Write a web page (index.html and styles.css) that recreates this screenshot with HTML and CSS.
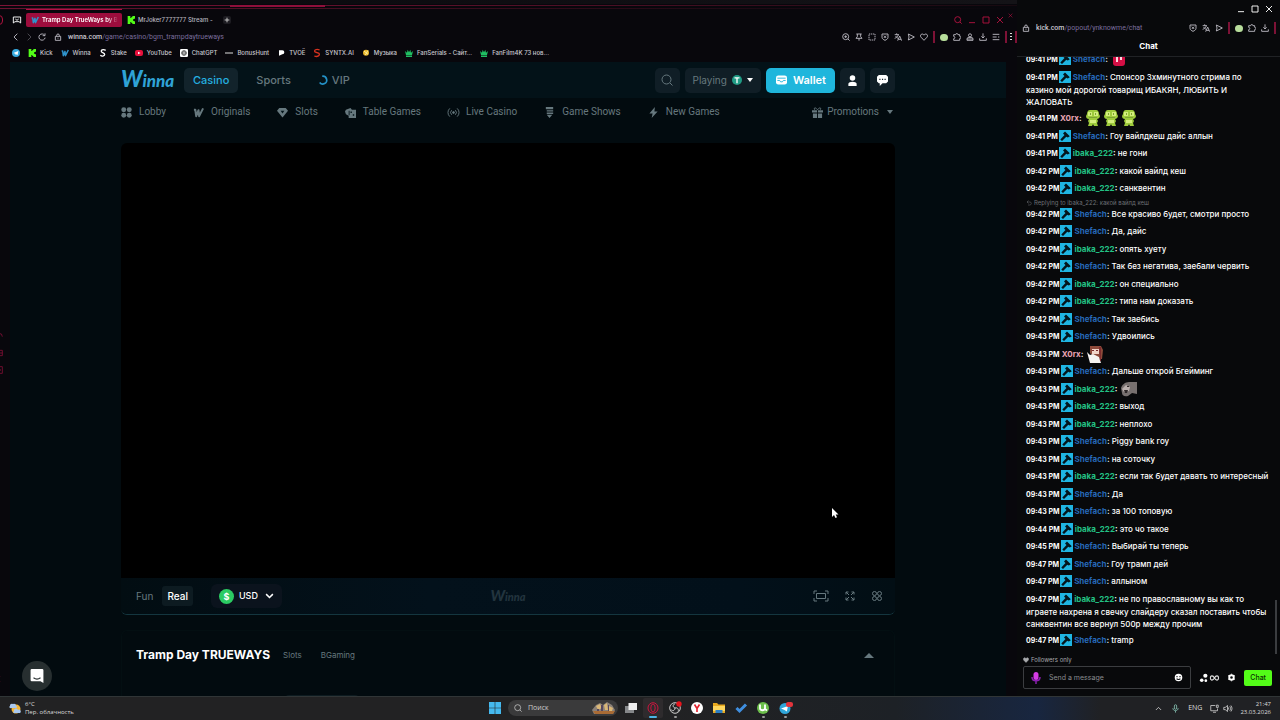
FILE: index.html
```html
<!DOCTYPE html>
<html lang="ru">
<head>
    <meta charset="UTF-8">
    <meta name="viewport" content="width=device-width, initial-scale=1.0">
    <title>Tramp Day TrueWays by BGaming</title>
    <link rel="stylesheet" href="styles.css">
</head>
<body>
    <!-- shared icons -->
    <svg class="sprite" aria-hidden="true">
        <symbol id="i-lock" viewBox="0 0 12 12"><path d="M2 5h8v6H2zM4 5V3.500a2 2 0 0 1 4 0V5M6 7v1.500"/></symbol>
        <symbol id="i-search" viewBox="0 0 12 12"><circle cx="5.500" cy="5.500" r="4.500"/><path d="M9 9l2.500 2.500"/></symbol>
        <symbol id="i-zoom" viewBox="0 0 12 12"><circle cx="5.500" cy="5.500" r="4.500"/><path d="M9 9l2.500 2.500M3.500 5.500h4M5.500 3.500v4"/></symbol>
        <symbol id="i-pin" viewBox="0 0 12 12"><path d="M2 1.500h8M3.500 1.500v4L1.500 8h9l-2-2.500v-4M6 8v3.500"/></symbol>
        <symbol id="i-snap" viewBox="0 0 12 12"><path d="M1.500 1.500h9v9h-9z" stroke-dasharray="2 1"/></symbol>
        <symbol id="i-shield" viewBox="0 0 12 12"><path d="M1.500 1.500h9v5c0 2-2 3.500-4.500 4.500C3.500 10 1.500 8.500 1.500 6.500zM4.300 4l3.400 3.400M7.700 4L4.300 7.400"/></symbol>
        <symbol id="i-translate" viewBox="0 0 12 12"><path d="M1 2.500h6.500M4 .5v2M6.500 3C5.500 5.500 3.500 7 1 8M2.500 4.500C3.500 6.500 5 7.500 6 8M5.500 11.500l3-7 3 7M6.500 9.500h4"/></symbol>
        <symbol id="i-send" viewBox="0 0 12 12"><path d="M2 1.500L11 6l-9 4.500L3 6z"/></symbol>
        <symbol id="i-heart" viewBox="0 0 12 12"><path d="M6 11L1.500 6.300C-.2 4.500 1 1.500 3.400 1.500 4.700 1.500 5.500 2.400 6 3.300c.5-.9 1.300-1.800 2.600-1.800 2.400 0 3.600 3 1.900 4.800z"/></symbol>
        <symbol id="i-puzzle" viewBox="0 0 12 12"><path d="M1 2.500h3a1.700 1.700 0 0 1 3.400 0H10V5a1.700 1.700 0 0 1 0 3.400V11H1V8.500a1.700 1.700 0 0 0 0-3.400z"/></symbol>
        <symbol id="i-user" viewBox="0 0 12 12"><circle cx="6" cy="3.500" r="2.300"/><path d="M1.500 8c1-2 8-2 9 0v3h-9zM1.500 9h9"/></symbol>
        <symbol id="i-down" viewBox="0 0 12 12"><path d="M6 .5v7M3.500 5L6 7.500 8.500 5M1 8v3h10V8"/></symbol>
        <symbol id="i-menu" viewBox="0 0 12 12"><path d="M1 2h10M1 6h6M9 6h2M1 10h10"/></symbol>
        <symbol id="i-min" viewBox="0 0 12 12"><path d="M1.500 10h9"/></symbol>
        <symbol id="i-max" viewBox="0 0 12 12"><path d="M1.500 1.500h9v9h-9z"/></symbol>
        <symbol id="i-close" viewBox="0 0 12 12"><path d="M1.500 1.500l9 9M10.500 1.500l-9 9"/></symbol>
        <symbol id="i-kick" viewBox="0 0 12 12"><path fill="#53fc18" stroke="none" d="M1 0h4v3h1.500V1.500H8V0h4v4h-1.500v1H9v2h1.500v1H12v4H8v-1.500H6.500V9H5v3H1z"/></symbol>
        <symbol id="i-winna" viewBox="0 0 12 12"><path fill="none" stroke="currentColor" stroke-width="2.200" stroke-linejoin="round" d="M1 3l1.500 0 1 7L6 3.500l.7 6.500L11 1.500"/></symbol>
        <symbol id="i-crown" viewBox="0 0 12 12"><path fill="#1fbf62" stroke="none" d="M0 3l3 2.500L4 1l2 4 2-4 1 4.500L12 3l-1.500 6h-9zM1.500 9.800h9V12h-9z"/></symbol>
        <symbol id="i-mod" viewBox="0 0 12 12"><path fill="#1fb5e2" stroke="none" d="M0 0h12v12H0z"/><path fill="#04151c" stroke="none" d="M6 1.500l4.800 4.800-2 1.200-1.500-.8L3 11 1.300 9.500 5.500 5 4 3.500z"/></symbol>
        <symbol id="i-frog" viewBox="0 0 16 18"><g stroke="none"><path fill="#9ecb3c" d="M2 5c0-2 1-4 3-4h6c2 0 3 2 3 4l1 2c0 2-2 3-3 3l1 2-1 2 1 3H9l-1-2-1 2H3l1-3-1-2 1-2C2 10 1 9 1 7z"/><path fill="#d3ee7c" d="M3 3h4v4H3zM9 3h4v4H9zM5 11h6v3H5z"/><path fill="#7da332" d="M4 8h8v1H4zM5 4h1v2H5zM10 4h1v2h-1zM7 15h2v1H7z"/></g></symbol>
    </svg>

    <main class="desktop">
        <section class="browser">
            <div class="frame-lines"></div>
            <div class="tabbar">
                <i class="gx-mark"></i>
                <svg class="icon" viewBox="0 0 12 12"><path d="M.5 1.500h11v9l-2.500-2H3l-2.500 2zM3.500 4.500L6 6.500l2.500-2"/></svg>
                <button class="tab active"><svg class="icon blue" viewBox="0 0 12 12"><use href="#i-winna"/></svg><span>Tramp Day TrueWays by B</span></button>
                <button class="tab"><svg class="icon" viewBox="0 0 12 12"><use href="#i-kick"/></svg><span>MrJoker7777777 Stream -</span></button>
                <button class="new-tab" aria-label="Новая вкладка"><svg class="icon" viewBox="0 0 12 12"><path d="M6 2.500v7M2.500 6h7"/></svg></button>
                <div class="window-buttons red">
                    <button aria-label="Поиск вкладок"><svg class="icon" viewBox="0 0 12 12"><use href="#i-search"/></svg></button>
                    <button aria-label="Свернуть"><svg class="icon" viewBox="0 0 12 12"><use href="#i-min"/></svg></button>
                    <button aria-label="Развернуть"><svg class="icon" viewBox="0 0 12 12"><use href="#i-max"/></svg></button>
                    <button aria-label="Закрыть"><svg class="icon" viewBox="0 0 12 12"><use href="#i-close"/></svg></button>
                </div>
                <svg class="icon behind-close" viewBox="0 0 12 12"><use href="#i-close"/></svg>
            </div>
            <div class="address">
                <div class="history">
                    <svg class="icon" viewBox="0 0 12 12"><path d="M8 1L3 6l5 5"/></svg>
                    <svg class="icon dim" viewBox="0 0 12 12"><path d="M4 1l5 5-5 5"/></svg>
                    <svg class="icon" viewBox="0 0 12 12"><path d="M10 3.500A4.700 4.700 0 1 0 10.700 7M10.500 .5v3.500H7"/></svg>
                </div>
                <svg class="icon" viewBox="0 0 12 12"><use href="#i-lock"/></svg>
                <span class="url"><b>winna.com</b>/game/casino/bgm_trampdaytrueways</span>
                <div class="tools">
                    <svg class="icon" viewBox="0 0 12 12"><use href="#i-zoom"/></svg>
                    <svg class="icon" viewBox="0 0 12 12"><use href="#i-pin"/></svg>
                    <svg class="icon" viewBox="0 0 12 12"><use href="#i-snap"/></svg>
                    <svg class="icon" viewBox="0 0 12 12"><use href="#i-shield"/></svg>
                    <svg class="icon" viewBox="0 0 12 12"><use href="#i-translate"/></svg>
                    <svg class="icon" viewBox="0 0 12 12"><use href="#i-send"/></svg>
                    <svg class="icon" viewBox="0 0 12 12"><use href="#i-heart"/></svg>
                    <i class="sep"></i>
                    <i class="green-dot"></i>
                    <svg class="icon" viewBox="0 0 12 12"><use href="#i-puzzle"/></svg>
                    <svg class="icon" viewBox="0 0 12 12"><use href="#i-user"/></svg>
                    <svg class="icon" viewBox="0 0 12 12"><use href="#i-down"/></svg>
                    <svg class="icon" viewBox="0 0 12 12"><use href="#i-menu"/></svg>
                    <i class="sep"></i>
                    <svg class="dots" viewBox="0 0 2 8"><path d="M0 0h2v1H0zM0 3h2v1H0zM0 6h2v1H0z"/></svg>
                    <i class="sep"></i>
                </div>
            </div>
            <nav class="bookmarks">
                <a href="#" aria-label="Telegram"><svg class="icon" viewBox="0 0 12 12"><circle cx="6" cy="6" r="6" fill="#36a9df" stroke="none"/><path fill="#fff" stroke="none" d="M2 6l7.500-3-1.200 6.500L6 8 5 9V7z"/></svg></a>
                <a href="#"><svg class="icon" viewBox="0 0 12 12"><use href="#i-kick"/></svg>Kick</a>
                <a href="#"><svg class="icon blue" viewBox="0 0 12 12"><use href="#i-winna"/></svg>Winna</a>
                <a href="#"><svg class="icon" viewBox="0 0 12 12"><path stroke="#fff" stroke-width="2" d="M10 2C6-.5 2 2 4 4.500c1 1 5 1.500 4.500 4C8 11 4 11.500 2 9.500"/></svg>Stake</a>
                <a href="#"><svg class="icon" viewBox="0 0 12 12"><rect y="1.500" width="12" height="9" rx="3" fill="#e8103c" stroke="none"/><path fill="#fff" stroke="none" d="M4.500 4l4 2-4 2z"/></svg>YouTube</a>
                <a href="#"><svg class="icon" viewBox="0 0 12 12"><rect width="12" height="12" rx="2" fill="#fff" stroke="none"/><circle cx="6" cy="6" r="3.500" stroke="#444"/><path stroke="#444" d="M6 4l2 1v2L6 8 4 7V5z"/></svg>ChatGPT</a>
                <a href="#"><svg class="icon" viewBox="0 0 12 12"><path stroke="#aaa" stroke-width="2" d="M0 6h12"/></svg>BonusHunt</a>
                <a href="#"><svg class="icon" viewBox="0 0 12 12"><path fill="#fff" stroke="none" d="M3 2h5a3 3 0 0 1 0 6L3 10z"/></svg>TVOЁ</a>
                <a href="#"><svg class="icon" viewBox="0 0 12 12"><path stroke="#d8321f" stroke-width="2" d="M10 1.500C5-.5 1 1.500 3 4.500L9 6.500c2 3-2 6-7 4"/></svg>SYNTX.AI</a>
                <a href="#"><svg class="icon" viewBox="0 0 12 12"><circle cx="6" cy="5.500" r="4.500" fill="#e9b62a" stroke="none"/><path stroke="#fff2a0" d="M3 3l6 5M9 2L5 9"/></svg>Музыка</a>
                <a href="#"><svg class="icon" viewBox="0 0 12 12"><use href="#i-crown"/></svg>FanSerials - Сайт...</a>
                <a href="#"><svg class="icon" viewBox="0 0 12 12"><use href="#i-crown"/></svg>FanFilm4K 73 нов...</a>
            </nav>

            <div class="viewport">
                <aside class="side-strip">
                    <svg class="icon" viewBox="0 0 12 12"><path d="M1 7a5 5 0 0 1 10 0"/></svg>
                    <svg class="icon" viewBox="0 0 12 12"><path d="M2 2h9v8H2zM2 6h9"/></svg>
                    <svg class="icon" viewBox="0 0 12 12"><circle cx="6" cy="6" r="2"/><path d="M1 1h10v10H1z"/></svg>
                    <svg class="icon last" viewBox="0 0 12 12"><use href="#i-close"/></svg>
                </aside>
                <div class="page">
                    <header class="site-header">
                        <div class="wrap header-row">
                            <a class="logo" href="#">Winna</a>
                            <a class="section active" href="#">Casino</a>
                            <a class="section" href="#">Sports</a>
                            <a class="section" href="#"><svg class="icon ring" viewBox="0 0 12 12"><path d="M5 1.500A4.700 4.700 0 1 1 2 9" /></svg>VIP</a>
                            <div class="actions">
                                <button class="square muted" aria-label="Search"><svg class="icon" viewBox="0 0 12 12"><use href="#i-search"/></svg></button>
                                <button class="playing">Playing
                                    <svg class="icon coin" viewBox="0 0 12 12"><circle cx="6" cy="6" r="6" fill="#209b85" stroke="none"/><path stroke="#fff" stroke-width="1.600" d="M3 3.500h6M6 3.500V10"/></svg>
                                    <i class="caret white"></i>
                                </button>
                                <button class="wallet"><svg class="icon" viewBox="0 0 12 12"><rect y="1" width="12" height="10" rx="2.500" fill="#fff" stroke="none"/><path stroke="#1fb6dc" d="M1.500 4h9M1.500 6.500H4l1 1.500h2l1-1.500h2.500"/></svg>Wallet</button>
                                <button class="square" aria-label="Account"><svg class="icon" viewBox="0 0 12 12"><circle cx="6" cy="3.200" r="3" fill="#fff" stroke="none"/><path fill="#fff" stroke="none" d="M1.500 12V9.500c0-3 9-3 9 0V12z"/></svg></button>
                                <button class="square" aria-label="Chat"><svg class="icon" viewBox="0 0 12 12"><path fill="#fff" stroke="none" d="M2 0h8l2 2v5l-2 2H6l-3 3V9H2L0 7V2z"/><path stroke="#17242b" stroke-width="1.400" d="M2.500 4.700h1.300M5.400 4.700h1.300M8.200 4.700h1.300"/></svg></button>
                            </div>
                        </div>
                    </header>
                    <nav class="site-nav">
                        <div class="wrap nav-row">
                            <a href="#"><svg class="icon solid" viewBox="0 0 12 12"><circle cx="3" cy="3" r="2.700"/><circle cx="9" cy="3" r="2.700"/><circle cx="3" cy="9" r="2.700"/><circle cx="9" cy="9" r="2.700"/></svg>Lobby</a>
                            <a href="#"><svg class="icon" viewBox="0 0 12 12"><use href="#i-winna"/></svg>Originals</a>
                            <a href="#"><svg class="icon solid" viewBox="0 0 12 12"><path d="M2.500 1h7L12 4 6 11.500 0 4z"/><path fill="#03141a" d="M4 4h4L6 7z"/></svg>Slots</a>
                            <a href="#"><svg class="icon solid" viewBox="0 0 12 12"><path d="M1 3l5-2 1.500 2H12v9H4V9.500L1 8 0 5z"/><path fill="#03141a" d="M4 4h1v5H4zM6 5h1.500v1.500H6zM8.500 8H10v1.500H8.500z"/></svg>Table Games</a>
                            <a href="#"><svg class="icon" viewBox="0 0 12 12"><circle cx="6" cy="6" r="1" fill="currentColor"/><path d="M4 3.500a3.500 3.500 0 0 0 0 5M8 3.500a3.500 3.500 0 0 1 0 5M2 1.500a6 6 0 0 0 0 9M10 1.500a6 6 0 0 1 0 9"/></svg>Live Casino</a>
                            <a href="#"><svg class="icon solid" viewBox="0 0 12 12"><path d="M2 0h8v2.500H2zM3 3.500h7v1.500H3zM3 6h7v1.500H3zM3 8.500h6L6 12z"/></svg>Game Shows</a>
                            <a href="#"><svg class="icon solid" viewBox="0 0 12 12"><path d="M7.500 0L1.500 7H5l-1 5 6.500-7H7z"/></svg>New Games</a>
                            <a class="promo" href="#"><svg class="icon solid" viewBox="0 0 12 12"><path d="M0 3.500h5.500V6H0zM6.500 3.500H12V6H6.500zM1 7h4.500v5H1zM6.500 7H11v5H6.500z"/><path fill="none" stroke="currentColor" d="M6 3C3-1 1.500 2 3 3M6 3c3-4 4.500-1 3 0"/></svg>Promotions<i class="caret"></i></a>
                        </div>
                    </nav>

                    <div class="wrap">
                        <div class="game">
                            <div class="game-screen">
                                <svg class="cursor" viewBox="0 0 8 12"><path d="M1 1v9l2-2 1.500 3 1.500-.7L4.700 7.500H7.500z"/></svg>
                            </div>
                            <div class="game-bar">
                                <button class="mode">Fun</button>
                                <button class="mode on">Real</button>
                                <button class="currency"><i class="usd">$</i>USD
                                    <svg class="icon" viewBox="0 0 12 12"><path d="M1.500 3.500L6 8l4.500-4.500"/></svg>
                                </button>
                                <span class="logo small">Winna</span>
                                <div class="game-tools">
                                    <svg class="icon wide" viewBox="0 0 16 12"><path d="M1 4V1h3M12 1h3v3M15 8v3h-3M4 11H1V8M3.500 3.500h9v5h-9z"/></svg>
                                    <svg class="icon" viewBox="0 0 12 12"><path d="M2 4.500V2h2.500M7.500 2H10v2.500M10 7.500V10H7.500M4.500 10H2V7.500M2 2l3 3M10 2L7 5M10 10L7 7M2 10l3-3"/></svg>
                                    <svg class="icon" viewBox="0 0 12 12"><circle cx="3.500" cy="3.500" r="2"/><circle cx="8.500" cy="3.500" r="2"/><circle cx="3.500" cy="8.500" r="2"/><circle cx="8.500" cy="8.500" r="2"/></svg>
                                </div>
                            </div>
                        </div>
                        <div class="info">
                            <div class="info-head">
                                <h1>Tramp Day TRUEWAYS</h1>
                                <a href="#">Slots</a>
                                <a href="#">BGaming</a>
                                <i class="caret up"></i>
                            </div>
                            <div class="info-tabs"></div>
                        </div>
                    </div>
                    <button class="help" aria-label="Support"><svg class="icon" viewBox="0 0 12 12"><path fill="#fff" stroke="none" d="M1.500 0h9a1 1 0 0 1 1 1v11L9 10.500H1.500a1 1 0 0 1-1-1V1a1 1 0 0 1 1-1z"/><path stroke="#2a3132" d="M3 7.500c2 1.500 4 1.500 6 0"/></svg></button>
                </div>
            </div>
        </section>

        <section class="chat">
            <div class="window-buttons">
                <button aria-label="Свернуть"><svg class="icon" viewBox="0 0 12 12"><use href="#i-min"/></svg></button>
                <button aria-label="Развернуть"><svg class="icon" viewBox="0 0 12 12"><use href="#i-max"/></svg></button>
                <button aria-label="Закрыть"><svg class="icon" viewBox="0 0 12 12"><use href="#i-close"/></svg></button>
            </div>
            <div class="address">
                <svg class="icon" viewBox="0 0 12 12"><use href="#i-lock"/></svg>
                <span class="url"><b>kick.com</b>/popout/ynknowme/chat</span>
                <div class="tools">
                    <svg class="icon" viewBox="0 0 12 12"><use href="#i-shield"/></svg>
                    <svg class="icon" viewBox="0 0 12 12"><use href="#i-translate"/></svg>
                    <svg class="icon" viewBox="0 0 12 12"><use href="#i-send"/></svg>
                    <i class="sep"></i>
                    <i class="green-dot"></i>
                    <svg class="icon" viewBox="0 0 12 12"><use href="#i-puzzle"/></svg>
                    <svg class="icon" viewBox="0 0 12 12"><use href="#i-down"/></svg>
                    <i class="sep"></i>
                </div>
            </div>
            <h2>Chat</h2>
            <div class="log-area">
                <div class="log">
                    <p><time>09:41 PM</time><svg class="badge"><use href="#i-mod"/></svg><b class="shefach">Shefach</b><b>:</b> <svg class="emote" viewBox="0 0 16 18"><rect x="2" width="12" height="16" rx="3" fill="#d40f45"/><path fill="#ffd7df" d="M5 7h2v5H5zM9 7h2v3H9z"/></svg></p>
                    <p><time>09:41 PM</time><svg class="badge"><use href="#i-mod"/></svg><b class="shefach">Shefach</b><b>:</b> Спонсор 3хминутного стрима по казино мой дорогой товарищ ИБАКЯН, ЛЮБИТЬ И ЖАЛОВАТЬ</p>
                    <p><time>09:41 PM</time> <b class="x0rx">X0rx</b><b>:</b> <svg class="emote"><use href="#i-frog"/></svg><svg class="emote"><use href="#i-frog"/></svg><svg class="emote"><use href="#i-frog"/></svg></p>
                    <p><time>09:41 PM</time><svg class="badge"><use href="#i-mod"/></svg><b class="shefach">Shefach</b><b>:</b> Гоу вайлдкеш дайс аллын</p>
                    <p><time>09:41 PM</time><svg class="badge"><use href="#i-mod"/></svg><b class="ibaka">ibaka_222</b><b>:</b> не гони</p>
                    <p><time>09:42 PM</time><svg class="badge"><use href="#i-mod"/></svg><b class="ibaka">ibaka_222</b><b>:</b> какой вайлд кеш</p>
                    <p><time>09:42 PM</time><svg class="badge"><use href="#i-mod"/></svg><b class="ibaka">ibaka_222</b><b>:</b> санквентин</p>
                    <div class="reply">
                        <small><svg class="icon" viewBox="0 0 12 12"><path d="M5 1L2 4l3 3M2 4h6c4 0 3 6 0 6H4"/></svg>Replying to ibaka_222: какой вайлд кеш</small>
                        <p><time>09:42 PM</time><svg class="badge"><use href="#i-mod"/></svg><b class="shefach">Shefach</b><b>:</b> Все красиво будет, смотри просто</p>
                    </div>
                    <p><time>09:42 PM</time><svg class="badge"><use href="#i-mod"/></svg><b class="shefach">Shefach</b><b>:</b> Да, дайс</p>
                    <p><time>09:42 PM</time><svg class="badge"><use href="#i-mod"/></svg><b class="ibaka">ibaka_222</b><b>:</b> опять хуету</p>
                    <p><time>09:42 PM</time><svg class="badge"><use href="#i-mod"/></svg><b class="shefach">Shefach</b><b>:</b> Так без негатива, заебали червить</p>
                    <p><time>09:42 PM</time><svg class="badge"><use href="#i-mod"/></svg><b class="ibaka">ibaka_222</b><b>:</b> он специально</p>
                    <p><time>09:42 PM</time><svg class="badge"><use href="#i-mod"/></svg><b class="ibaka">ibaka_222</b><b>:</b> типа нам доказать</p>
                    <p><time>09:42 PM</time><svg class="badge"><use href="#i-mod"/></svg><b class="shefach">Shefach</b><b>:</b> Так заебись</p>
                    <p><time>09:43 PM</time><svg class="badge"><use href="#i-mod"/></svg><b class="shefach">Shefach</b><b>:</b> Удвоились</p>
                    <p><time>09:43 PM</time> <b class="x0rx">X0rx</b><b>:</b> <svg class="emote" viewBox="0 0 16 18"><path fill="#8d4a3a" d="M3 1h11l2 4-1 9H9L3 8z"/><path fill="#f0d3c8" d="M5 4h7v5H5z"/><path fill="#f5f3f2" d="M0 7l3 3 3-1 6 3 2 6H3z"/><path fill="#7b2b2e" d="M5 5h2v1H5zM9 5h2v1H9zM12 2h2v14h-1z"/></svg></p>
                    <p><time>09:43 PM</time><svg class="badge"><use href="#i-mod"/></svg><b class="shefach">Shefach</b><b>:</b> Дальше открой Бгейминг</p>
                    <p><time>09:43 PM</time><svg class="badge"><use href="#i-mod"/></svg><b class="ibaka">ibaka_222</b><b>:</b> <svg class="emote" viewBox="0 0 16 18"><path fill="#77706f" d="M0 8c1-3 4-6 8-6l8 0v12l-5-1-4 3c-4 1-6-1-6-3z"/><path fill="#b9aeac" d="M1 9l4-4 4 2-1 4-5 1z"/><path fill="#2e2829" d="M3 10l4 0-1 3-2 0zM6 6h2v1H6z"/></svg></p>
                    <p><time>09:43 PM</time><svg class="badge"><use href="#i-mod"/></svg><b class="ibaka">ibaka_222</b><b>:</b> выход</p>
                    <p><time>09:43 PM</time><svg class="badge"><use href="#i-mod"/></svg><b class="ibaka">ibaka_222</b><b>:</b> неплохо</p>
                    <p><time>09:43 PM</time><svg class="badge"><use href="#i-mod"/></svg><b class="shefach">Shefach</b><b>:</b> Piggy bank гоу</p>
                    <p><time>09:43 PM</time><svg class="badge"><use href="#i-mod"/></svg><b class="shefach">Shefach</b><b>:</b> на соточку</p>
                    <p><time>09:43 PM</time><svg class="badge"><use href="#i-mod"/></svg><b class="ibaka">ibaka_222</b><b>:</b> если так будет давать то интересный</p>
                    <p><time>09:43 PM</time><svg class="badge"><use href="#i-mod"/></svg><b class="shefach">Shefach</b><b>:</b> Да</p>
                    <p><time>09:43 PM</time><svg class="badge"><use href="#i-mod"/></svg><b class="shefach">Shefach</b><b>:</b> за 100 топовую</p>
                    <p><time>09:44 PM</time><svg class="badge"><use href="#i-mod"/></svg><b class="ibaka">ibaka_222</b><b>:</b> это чо такое</p>
                    <p><time>09:45 PM</time><svg class="badge"><use href="#i-mod"/></svg><b class="shefach">Shefach</b><b>:</b> Выбирай ты теперь</p>
                    <p><time>09:47 PM</time><svg class="badge"><use href="#i-mod"/></svg><b class="shefach">Shefach</b><b>:</b> Гоу трамп дей</p>
                    <p><time>09:47 PM</time><svg class="badge"><use href="#i-mod"/></svg><b class="shefach">Shefach</b><b>:</b> аллыном</p>
                    <p><time>09:47 PM</time><svg class="badge"><use href="#i-mod"/></svg><b class="ibaka">ibaka_222</b><b>:</b> не по православному вы как то играете нахрена я свечку слайдеру сказал поставить чтобы санквентин все вернул 500р между прочим</p>
                    <p><time>09:47 PM</time><svg class="badge"><use href="#i-mod"/></svg><b class="shefach">Shefach</b><b>:</b> tramp</p>
                </div>
                <i class="thumb"></i>
            </div>
            <div class="followers"><svg class="icon filled" viewBox="0 0 12 12"><use href="#i-heart"/></svg>Followers only</div>
            <form class="composer">
                <div class="field">
                    <svg class="icon" viewBox="0 0 12 12"><rect x="3.500" y="0" width="5" height="8" rx="2.500" fill="#d63ce6" stroke="none"/><path stroke="#8b1fb0" stroke-width="1.500" d="M2 5c0 5 8 5 8 0M6 9v3"/></svg>
                    <input type="text" placeholder="Send a message" aria-label="Send a message">
                    <svg class="icon" viewBox="0 0 12 12"><circle cx="6" cy="6" r="5" fill="#fff" stroke="none"/><path stroke="#0b0d0f" stroke-width="1.500" d="M4 4v1.500M8 4v1.500M3.500 7.500c1 1.500 4 1.500 5 0"/></svg>
                </div>
                <svg class="icon points" viewBox="0 0 22 12"><g fill="#fff" stroke="none"><circle cx="3" cy="8.500" r="2"/><circle cx="7" cy="3.500" r="2.300"/><circle cx="7.500" cy="9" r="1.500"/></g><path stroke="#ddd" stroke-width="1.300" d="M17 6c-2-3.500-4.500-2.500-4.500 0s2.500 3.500 4.500 0 4.500-2.500 4.500 0-2.500 3.500-4.500 0z"/></svg>
                <svg class="icon" viewBox="0 0 12 12"><circle cx="6" cy="6" r="3" stroke="#fff" stroke-width="2.500"/><path stroke="#fff" stroke-width="1.500" d="M6 1v1M6 10v1M1.700 3.500l1 .5M9.300 8l1 .5M1.700 8.500l1-.5M9.300 4l1-.5"/></svg>
                <button type="button">Chat</button>
            </form>
        </section>
    </main>

    <footer class="taskbar">
        <div class="weather">
            <svg class="icon" viewBox="0 0 12 12"><circle cx="7" cy="7" r="4.500" fill="#f3b73b" stroke="none"/><path fill="#a9c8ef" stroke="none" d="M1 4a2 2 0 0 1 3-2 2 2 0 0 1 3 2 1 1 0 0 1 0 2H2a1 1 0 0 1-1-2zM5 9a2 2 0 0 1 4-1 1.500 1.500 0 0 1 2 3H6a1 1 0 0 1-1-2z"/></svg>
            <div>6°C<br>Пер. облачность</div>
        </div>
        <div class="apps">
            <svg class="icon" viewBox="0 0 12 12"><path fill="#45b9ee" stroke="none" d="M0 0h5.700v5.700H0zM6.300 0H12v5.700H6.300zM0 6.300h5.700V12H0zM6.300 6.300H12V12H6.300z"/></svg>
            <label class="search">
                <svg class="icon" viewBox="0 0 12 12"><use href="#i-search"/></svg>
                <input type="text" placeholder="Поиск">
                <svg class="scene" viewBox="0 0 26 14"><path fill="#8a8178" d="M1 9l4-5 4-2 3 2 4-3 5 3 3 5-2 4H3z"/><path fill="#d9b777" d="M5 5l4-2 2 4-4 2zM13 4l3-2 1 7h-3zM18 5l4 2-1 3h-3z"/><path fill="#a96b35" d="M2 10h22l-2 3H4z"/><path fill="#55475f" d="M10 4h2v6h-2zM17 4h1v6h-1zM6 8h2v2H6z"/></svg>
            </label>
            <svg class="icon" viewBox="0 0 12 12"><path fill="#858789" stroke="none" d="M0 4h9v7H0z"/><path fill="#eee" stroke="none" d="M3.500 1H12v7H3.500z"/></svg>
            <span class="app current"><svg class="icon" viewBox="0 0 12 12"><ellipse cx="6" cy="6" rx="5" ry="5.300" stroke="#c9163f"/><ellipse cx="6" cy="6" rx="2.200" ry="4" stroke="#c9163f"/></svg></span>
            <span class="app open"><svg class="icon" viewBox="0 0 12 12"><circle cx="6" cy="6" r="5.300" stroke="#ccc"/><path stroke="#ccc" d="M6 6C3 5 4 2 6 2M6 6c3-1 4 2 3 3.500M6 6c0 3-3 3.500-4 1.500"/><circle cx="10" cy="2" r="2.700" fill="#e8141c" stroke="none"/></svg></span>
            <svg class="icon" viewBox="0 0 12 12"><circle cx="6" cy="6" r="6" fill="#fff" stroke="none"/><path stroke="#e3202c" stroke-width="1.600" d="M3.500 2.500L6 6.500l2.500-4M6 6.500V10"/></svg>
            <svg class="icon" viewBox="0 0 12 12"><path fill="#e9a91e" stroke="none" d="M0 1h4l1.500 1.500H12V11H0z"/><path fill="#ffd75e" stroke="none" d="M0 4h12v5H0z"/><path fill="#2d7fc4" stroke="none" d="M2.500 8h7v3h-7z"/></svg>
            <svg class="icon" viewBox="0 0 12 12"><path stroke="#3f8fe0" stroke-width="3" d="M1.500 6l3 3L11 2.500"/></svg>
            <span class="app open"><svg class="icon" viewBox="0 0 12 12"><circle cx="6" cy="6" r="6" fill="#6cbf4b" stroke="none"/><path stroke="#fff" stroke-width="1.800" d="M3 2.500v3.500c0 3 5 3 5 0V2.500M8 7l2 1.500"/></svg></span>
            <span class="app open"><svg class="icon" viewBox="0 0 12 12"><circle cx="6" cy="6.500" r="5.500" fill="#30a6da" stroke="none"/><path fill="#fff" stroke="none" d="M2 6.500l7-2.500-1.200 5.500L5.500 8z"/><rect x="7" y="0" width="7" height="5" rx="2" fill="#e2343c" stroke="none"/></svg></span>
        </div>
        <div class="tray">
            <svg class="icon" viewBox="0 0 12 12"><path d="M2.500 8L6 4.500 9.500 8"/></svg>
            <svg class="icon" viewBox="0 0 12 12"><rect x="4.500" y="1" width="3" height="6" rx="1.500" stroke="#8fd0c0"/><path stroke="#8fd0c0" d="M2.500 5.500c0 4.500 7 4.500 7 0M6 9v2.500"/></svg>
            <span>ENG</span>
            <div class="tray-pair">
                <svg class="icon" viewBox="0 0 12 12"><path d="M7 2H1v7h9V6M4 11h4M8.500 1.500H11v3H8.500z"/></svg>
                <svg class="icon" viewBox="0 0 12 12"><path d="M1 4.500h2L6 2v8L3 7.500H1zM7.500 4.500v3M9 3c1.500 2 1.500 4 0 6M10.500 2c2 2.500 2 5.500 0 8"/></svg>
            </div>
            <time class="clock">21:47<br>23.03.2026</time>
        </div>
    </footer>
</body>
</html>
```
FILE: styles.css
```css
* {
    box-sizing: border-box;
}
body {
    margin: 0;
    height: 100vh;
    display: flex;
    flex-direction: column;
    overflow: hidden;
    background: #08070c;
    color: #fff;
    font-family: Inter, "Noto Sans", sans-serif;
    font-size: 8px;
    line-height: 12px;
}
a {
    color: inherit;
    text-decoration: none;
}
button {
    font: inherit;
    color: inherit;
    background: none;
    border: 0;
    padding: 0;
}
input {
    font: inherit;
    color: inherit;
    background: none;
    border: 0;
    padding: 0;
    outline: none;
    flex: 1;
    min-width: 0;
}
p, h1, h2 {
    margin: 0;
}
.sprite {
    display: none;
}
.icon {
    width: 12px;
    height: 12px;
    flex: none;
    fill: none;
    stroke: currentColor;
    stroke-width: 1;
    overflow: visible;
}
.icon.blue {
    color: #2f93cc;
}

.desktop {
    flex: 1;
    min-height: 0;
    display: grid;
    grid-template-columns: minmax(0, 1fr) 263px;
}

/* browser window */
.browser {
    display: flex;
    flex-direction: column;
    min-width: 0;
    min-height: 0;
    overflow: hidden;
}
.frame-lines {
    height: 10px;
    flex: none;
    background:
        linear-gradient(90deg, transparent 230px, #8f0f3b 230px 325px, transparent 325px) 0 5px / 100% 2px no-repeat,
        linear-gradient(90deg, #7d1236, #4a0f24 60%, #160a10) 0 5px / 100% 1px no-repeat,
        linear-gradient(90deg, transparent 26px, #b30f45 26px 122px, transparent 122px) 0 9px / 100% 1px no-repeat,
        linear-gradient(90deg, #6a1230, #2b0a17 60%, #08070c) 0 8px / 100% 1px no-repeat,
        linear-gradient(90deg, #08070c, #141317) 0 0 / 100% 4px no-repeat;
}
.tabbar {
    height: 20px;
    flex: none;
    display: flex;
    align-items: center;
    position: relative;
    padding-right: 13px;
}
.tabbar .icon, .address .icon, .bookmarks .icon {
    width: 8px;
    height: 8px;
    stroke-width: 1.4;
}
.tabbar > .icon {
    margin: 0 5px 0 10px;
}
.gx-mark {
    width: 8px;
    height: 10px;
    margin-left: -5px;
    border: 1px solid #b0123f;
    border-radius: 5px;
}
.tab {
    display: flex;
    align-items: center;
    gap: 3px;
    height: 14px;
    padding: 0 6px 0 5px;
    border-radius: 2px;
    font-size: 6px;
    font-weight: 500;
    color: #b9b7c0;
    white-space: nowrap;
}
.tab.active {
    width: 96px;
    background: #9d0d3d;
    color: #fff;
    font-weight: 600;
}
.tab.active span {
    -webkit-mask-image: linear-gradient(90deg, #000 85%, transparent);
    mask-image: linear-gradient(90deg, #000 85%, transparent);
}
.new-tab {
    display: flex;
    margin-left: 4px;
    border-radius: 2px;
    background: #1d1c22;
    color: #ccc;
}
.window-buttons {
    display: flex;
    justify-content: flex-end;
    gap: 6px;
}
.window-buttons button {
    display: flex;
}
.window-buttons .icon {
    width: 8px;
    height: 8px;
    stroke-width: 1.4;
}
.window-buttons.red {
    margin-left: auto;
    color: #b0123f;
}
.tabbar > .behind-close {
    position: absolute;
    top: 3px;
    right: 4px;
    width: 5px;
    height: 5px;
    margin: 0;
    color: #b0123f;
}
.address {
    display: flex;
    align-items: center;
    gap: 6px;
    color: #b9b7c0;
}
.browser > .address {
    height: 14px;
    flex: none;
    padding-left: 12px;
}
.history {
    display: flex;
    gap: 5px;
    margin-right: 2px;
}
.dim {
    opacity: .4;
}
.url {
    font: 7px/12px Roboto, sans-serif;
    color: #7a6d9c;
}
.url b {
    font-weight: 500;
    color: #c9c7d0;
}
.tools {
    margin-left: auto;
    display: flex;
    align-items: center;
    gap: 5px;
}
.sep {
    width: 2px;
    height: 12px;
    flex: none;
    background: #7d1236;
}
.green-dot {
    width: 8px;
    height: 7px;
    border-radius: 4px;
    background: #b7dd9b;
}
.dots {
    width: 2px;
    height: 8px;
    fill: #ddd;
    margin: 0 -2px;
}
.bookmarks {
    display: flex;
    align-items: center;
    gap: 8px;
    height: 18px;
    flex: none;
    padding-left: 12px;
    font-size: 6px;
    font-weight: 500;
    color: #c9c7d0;
    white-space: nowrap;
}
.bookmarks a {
    display: flex;
    align-items: center;
    gap: 4px;
}

/* casino page */
.viewport {
    flex: 1;
    min-height: 0;
    display: flex;
    padding-right: 11px;
}
.side-strip {
    width: 10px;
    display: flex;
    flex-direction: column;
    gap: 9px;
    padding-top: 270px;
    overflow: hidden;
    color: #a01040;
}
.side-strip .icon {
    width: 8px;
    height: 8px;
    margin-left: -5px;
}
.side-strip .last {
    margin-top: auto;
    margin-bottom: 13px;
    width: 6px;
}
.page {
    flex: 1;
    min-width: 0;
    overflow: hidden;
    position: relative;
    background: #020b0f;
    color: #66787e;
}
.wrap {
    max-width: 774px;
    margin: 0 auto;
}
.site-header {
    background: #031218;
}
.header-row {
    display: flex;
    align-items: center;
    height: 36px;
}
.logo {
    width: 50px;
    margin-right: 13px;
    font: italic 900 17px/24px Lato, sans-serif;
    color: #2fa3d6;
}
.logo::first-letter {
    font-size: 22px;
}
.section {
    display: flex;
    align-items: center;
    gap: 4px;
    height: 25px;
    padding: 0 9px;
    margin-right: 9px;
    border-radius: 5px;
    font-size: 11px;
    font-weight: 500;
}
.section.active {
    background: #12232b;
    color: #25afe0;
}
.ring {
    width: 10px;
    color: #2491c6;
    stroke-width: 2;
}
.actions {
    margin-left: auto;
    display: flex;
    gap: 5px;
}
.actions button {
    display: flex;
    align-items: center;
    justify-content: center;
    height: 25px;
    border-radius: 5px;
    background: #101e26;
    font-size: 10px;
}
.actions .square {
    width: 25px;
}
.square .icon {
    width: 11px;
    height: 11px;
}
.actions .muted .icon {
    width: 12px;
    height: 12px;
}
.actions .playing {
    gap: 5px;
    padding: 0 8px;
}
.coin {
    width: 10px;
    height: 10px;
}
.actions .wallet {
    gap: 6px;
    padding: 0 9px 0 10px;
    background: #1fb6dc;
    color: #fff;
    font-size: 11px;
    font-weight: 600;
}
.wallet .icon {
    width: 11px;
}
.caret {
    border: 3px solid transparent;
    border-top: 4px solid currentColor;
    border-bottom: 0;
}
.caret.white {
    color: #fff;
}
.caret.up {
    border-width: 0 5px 5px;
    border-bottom: 5px solid currentColor;
    margin-left: auto;
}
.nav-row {
    display: flex;
    align-items: center;
    gap: 27px;
    height: 28px;
    font-family: Roboto, sans-serif;
    font-size: 10px;
}
.nav-row a {
    display: flex;
    align-items: center;
    gap: 7px;
    white-space: nowrap;
}
.nav-row .icon {
    width: 11px;
    height: 11px;
}
.solid {
    fill: currentColor;
    stroke: none;
}
.nav-row .promo {
    gap: 4px;
    margin-left: auto;
}
.promo .caret {
    margin: 0 2px 0 4px;
}
.game {
    margin-top: 17px;
    border: solid #14363f;
    border-width: 0 0 1px;
    border-radius: 6px;
    overflow: hidden;
}
.game-screen {
    position: relative;
    aspect-ratio: 16 / 9;
    background: #000;
}
.cursor {
    position: absolute;
    left: 92%;
    top: 84%;
    width: 8px;
    height: 12px;
    margin: -2px;
    fill: #fff;
}
.game-bar {
    display: grid;
    grid-template-columns: auto auto auto 1fr auto;
    align-items: center;
    height: 36px;
    padding: 0 12px 0 10px;
    background: linear-gradient(90deg, #020d12, #03111b 40%, #02101a 80%, #020e14);
    position: relative;
    font-size: 9px;
}
.mode {
    height: 20px;
    padding: 0 5px;
    border-radius: 3px;
    font-size: 10px;
}
.mode.on {
    margin-left: 4px;
    background: #0d1b21;
    color: #fff;
    font-weight: 500;
}
.currency {
    display: flex;
    align-items: center;
    gap: 5px;
    height: 24px;
    margin-left: 18px;
    padding: 0 8px;
    border-radius: 6px;
    background: #0b131d;
    color: #fff;
    font-weight: 500;
}
.currency .icon {
    stroke-width: 2;
    width: 9px;
    margin-left: 2px;
}
.usd {
    width: 15px;
    height: 15px;
    border-radius: 8px;
    background: #2bcb62;
    font: 700 9px/15px Inter, sans-serif;
}
.logo.small {
    position: absolute;
    left: 0;
    right: 0;
    width: auto;
    margin: 0;
    text-align: center;
    font-size: 11px;
    color: #22343e;
}
.logo.small::first-letter {
    font-size: 15px;
}
.game-tools {
    grid-column: 5;
    display: flex;
    align-items: center;
    gap: 15px;
}
.wide {
    width: 16px;
}
.info {
    margin-top: 15px;
    border: 1px solid #030f12;
    border-bottom: 0;
    border-radius: 6px;
}
.info-head {
    display: flex;
    align-items: center;
    height: 48px;
    padding: 0 20px 0 14px;
}
.info h1 {
    font-size: 12px;
    font-weight: 700;
    color: #fff;
    margin-right: 13px;
}
.info a {
    margin-right: 19px;
}
.info-tabs {
    width: 74px;
    height: 24px;
    margin: 16px 0 0 163px;
    border-radius: 4px;
    background: #0d1b20;
}
.help {
    position: absolute;
    left: 12px;
    bottom: 5px;
    width: 30px;
    height: 30px;
    border-radius: 15px;
    background: #272f30;
    display: flex;
    align-items: center;
    justify-content: center;
}
.help .icon {
    width: 14px;
    height: 14px;
}

/* popout chat */
.chat {
    display: flex;
    flex-direction: column;
    min-width: 0;
    min-height: 0;
    background: #08090b;
}
.chat > .window-buttons {
    padding: 5px 7px 6px 0;
}
.chat .address {
    height: 18px;
    flex: none;
    padding: 0 4px 0 5px;
}
h2 {
    height: 20px;
    flex: none;
    border-bottom: 1px solid #202225;
    font-size: 8px;
    line-height: 19px;
    text-align: center;
}
.log-area {
    flex: 1;
    min-height: 0;
    display: flex;
    justify-content: space-between;
    overflow: hidden;
}
.log {
    flex: 1;
    display: flex;
    flex-direction: column;
    justify-content: space-between;
    margin-top: -4px;
    padding: 0 4px 7px 9px;
}
.log p {
    font-weight: 500;
}
.log time {
    font-size: 7px;
    font-weight: 700;
}
.badge {
    width: 12px;
    height: 12px;
    margin: -2px 2px -2px 1px;
    vertical-align: -1px;
}
.emote {
    width: 16px;
    height: 18px;
    margin: -5px 1px;
    vertical-align: -1px;
}
.shefach {
    color: #2668b8;
}
.ibaka {
    color: #23c184;
}
.x0rx {
    color: #e9a5b4;
}
.reply small {
    display: flex;
    align-items: center;
    gap: 2px;
    margin-top: -2px;
    font-size: 6px;
    line-height: 10px;
    color: #6d7075;
}
.reply .icon {
    width: 6px;
    height: 6px;
}
.thumb {
    align-self: flex-end;
    width: 2px;
    height: 54px;
    margin-right: 3px;
    background: #3b3d40;
}
.followers {
    display: flex;
    align-items: center;
    gap: 2px;
    padding: 0 6px 1px;
    font-size: 6px;
    line-height: 11px;
    color: #a9abad;
}
.filled {
    width: 6px;
    height: 6px;
    fill: currentColor;
}
.composer {
    display: flex;
    align-items: center;
    gap: 8px;
    padding: 0 8px 7px 6px;
}
.field {
    flex: 1;
    min-width: 0;
    display: flex;
    align-items: center;
    gap: 7px;
    height: 23px;
    padding: 0 7px 0 6px;
    border: 1px solid #3b3d40;
    border-radius: 2px;
    font-size: 7px;
}
.field .icon:last-child, .composer > .icon {
    width: 9px;
    height: 9px;
}
.composer > .points {
    width: 20px;
    height: 12px;
}
.composer button {
    height: 16px;
    padding: 0 6px;
    border-radius: 2px;
    background: #53fc18;
    color: #0b3002;
    font-size: 7px;
    font-weight: 500;
}
::placeholder {
    color: #8a8c8f;
    opacity: 1;
}

/* taskbar */
.taskbar {
    height: 24px;
    flex: none;
    display: grid;
    grid-template-columns: 1fr auto 1fr;
    align-items: center;
    padding: 0 9px 1px;
    border-top: 1px solid #303536;
    background: linear-gradient(90deg, #222223 50%, #1d2126 70%, #182640 81%, #202124 86%);
    font: 6px/8px "Open Sans", sans-serif;
    color: #ddd;
}
.weather, .apps, .tray, .tray-pair {
    display: flex;
    align-items: center;
}
.weather {
    gap: 4px;
}
.apps {
    gap: 10px;
}
.search {
    display: flex;
    align-items: center;
    gap: 6px;
    width: 110px;
    height: 16px;
    margin: 0 -3px;
    padding: 0 1px 0 6px;
    border-radius: 8px;
    background: #3a3a3b;
    font-size: 7px;
}
.search .icon {
    width: 8px;
    height: 8px;
}
.search ::placeholder {
    color: #ccc;
}
.scene {
    width: 26px;
    height: 14px;
}
.app {
    display: flex;
    flex-direction: column;
    align-items: center;
    height: 20px;
    padding-top: 4px;
    gap: 2px;
}
.app::after {
    content: "";
    width: 3px;
    height: 2px;
    border-radius: 1px;
    background: #999;
}
.app.current {
    margin: 0 -4px;
    padding: 4px 4px 0;
    background: #2e2b2d;
    border-radius: 2px;
}
.app.current::after {
    width: 8px;
    background: #4cb4e6;
}
.tray {
    justify-content: flex-end;
    gap: 8px;
}
.tray span {
    font-size: 7px;
}
.tray .icon {
    width: 9px;
    height: 9px;
}
.tray-pair {
    gap: 4px;
}
.clock {
    text-align: right;
}
```
